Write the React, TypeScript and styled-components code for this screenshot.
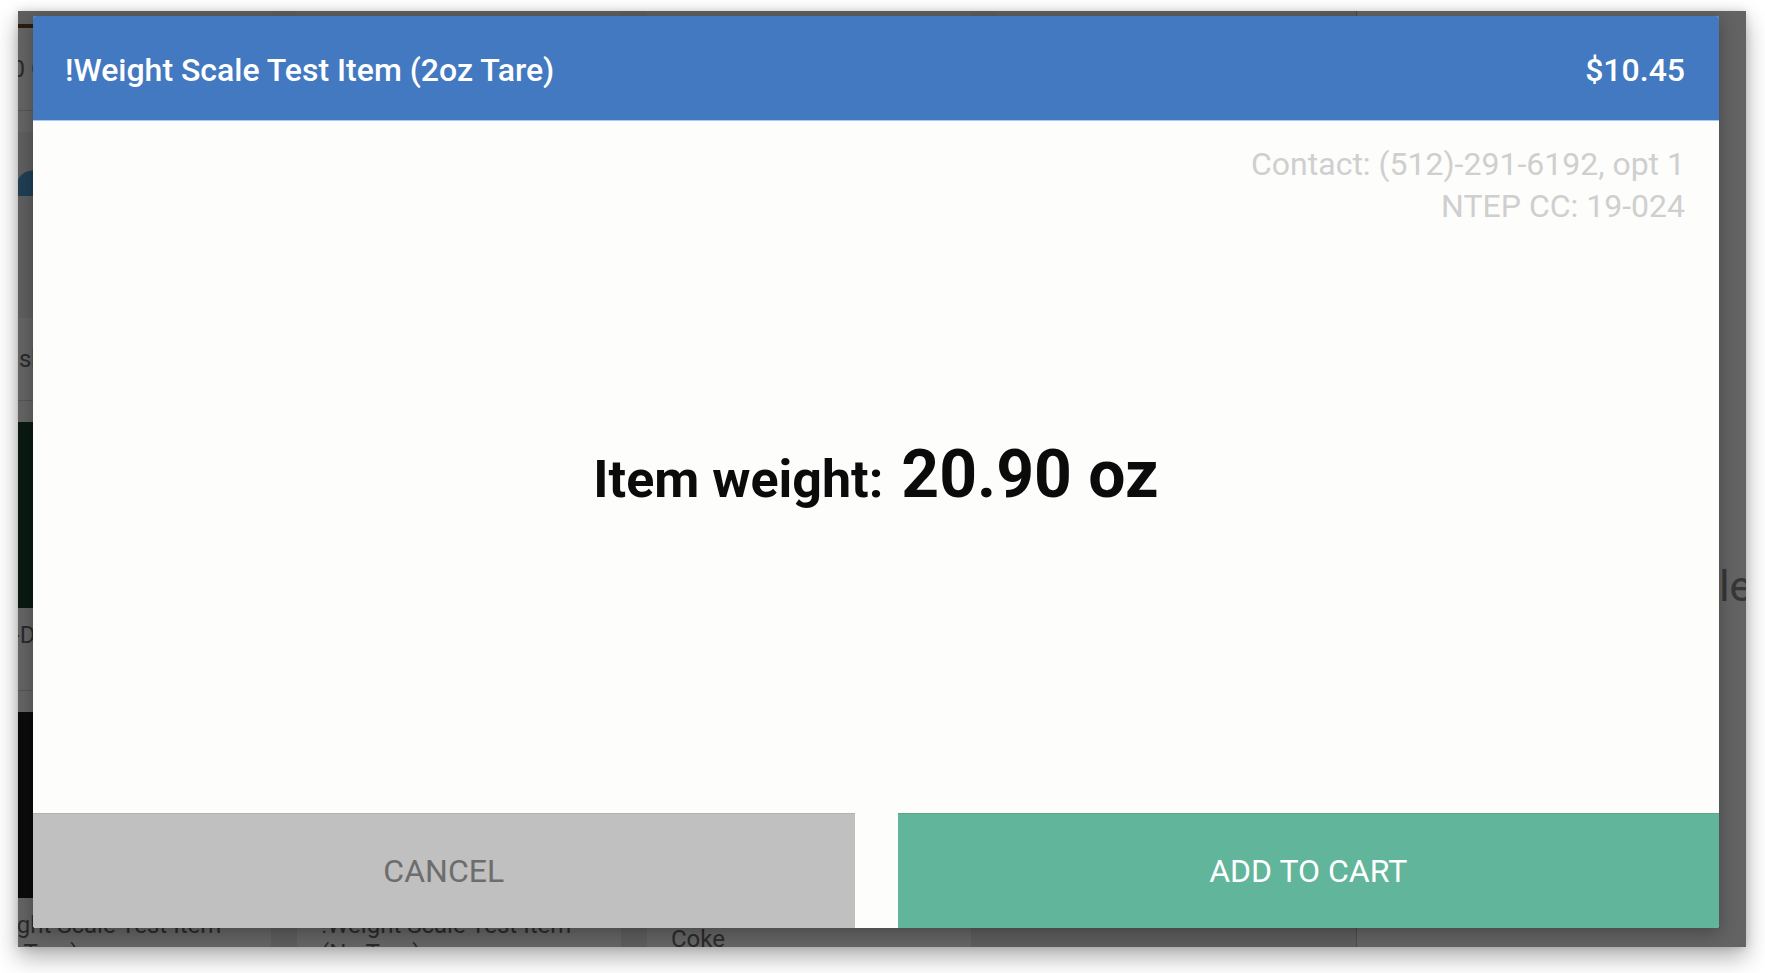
import React from 'react';
import styled, {createGlobalStyle} from "styled-components";

type Product = {
	name: string
	image: string
	blob?: boolean
}

const rows: Product[][] = [
	[
		{name: "$100 Gift Card", image: "linear-gradient(#eeeeee 0 182px, #6a4626 182px)"},
		{name: "Bottled Water", image: "#eeeeee"},
		{name: "Chips", image: "#efefef"},
		{name: "Candy Bar", image: "#eeeeee"},
	],
	[
		{name: "Danish", image: "#eeeeee", blob: true},
		{name: "Muffin", image: "#e6d8c6"},
		{name: "Bagel", image: "#e9dcc4"},
		{name: "Cookie", image: "#dcc8ae"},
	],
	[
		{name: "Mtn-Dew Code Red Soda Can", image: "#19412d"},
		{name: "Sprite", image: "#2f6b3c"},
		{name: "Pepsi", image: "#1d3d78"},
		{name: "Dr Pepper", image: "#5a1d25"},
	],
	[
		{name: "!Weight Scale Test Item (2oz Tare)", image: "#1c1c1c"},
		{name: "!Weight Scale Test Item (No Tare)", image: "#262626"},
		{name: "Coke", image: "#8d1b1b"},
	],
]

export default function App() {
	return (
		<>
			<GlobalStyle/>
			<StyledPage>
				<StyledDevice>
					<StyledLayout>
						<StyledCatalog>
							<StyledGrid>
								{rows.flat().map((item, i) => (
									<StyledCard key={i}>
										<StyledImage $bg={item.image}>
											{item.blob && (
												<svg width="324" height="186" viewBox="0 0 324 186">
													<path d="M70 64 L70 52 Q72 38 90 38 L240 38 L240 64 Z" fill="#4e9ed4"/>
												</svg>
											)}
										</StyledImage>
										<StyledName>{item.name}</StyledName>
									</StyledCard>
								))}
							</StyledGrid>
						</StyledCatalog>
						<StyledSalePanel>
							<StyledPanelTitle>Current Sale</StyledPanelTitle>
						</StyledSalePanel>
					</StyledLayout>

					<StyledOverlay/>

					<StyledDialog>
						<StyledHeader>
							<span>!Weight Scale Test Item (2oz Tare)</span>
							<span>$10.45</span>
						</StyledHeader>
						<StyledBody>
							<StyledContact>
								<div>Contact: (512)-291-6192, opt 1</div>
								<div>NTEP CC: 19-024</div>
							</StyledContact>
							<StyledWeightArea>
								<StyledWeight>
									<StyledWeightLabel>Item weight:</StyledWeightLabel>
									<StyledWeightValue>20.90 oz</StyledWeightValue>
								</StyledWeight>
							</StyledWeightArea>
						</StyledBody>
						<StyledActions>
							<StyledButton $variant="cancel">Cancel</StyledButton>
							<StyledButton $variant="confirm">Add to cart</StyledButton>
						</StyledActions>
					</StyledDialog>
				</StyledDevice>
			</StyledPage>
		</>
	)
}

const GlobalStyle = createGlobalStyle`
	html, body {
		margin: 0;
		padding: 0;
		background: #ffffff;
	}
	body {
		font-family: Roboto, "Noto Sans", "Liberation Sans", sans-serif;
	}
`

const StyledPage = styled.div`
	height: 973px;
	padding: 11px 0 0 18px;
	box-sizing: border-box;
	overflow: hidden;
`

const StyledDevice = styled.div`
	position: relative;
	width: 1728px;
	height: 936px;
	overflow: hidden;
	background: #e8eae8;
	box-shadow: 0 10px 22px rgba(0, 0, 0, 0.32), 0 0 8px rgba(0, 0, 0, 0.15);
`

const StyledLayout = styled.div`
	display: flex;
	height: 100%;
`

const StyledCatalog = styled.div`
	flex: 0 0 1338px;
	overflow: hidden;
	background: #e6e8e6;
`

const StyledGrid = styled.div`
	display: grid;
	grid-template-columns: repeat(4, 324px);
	column-gap: 26px;
	margin: -191px 0 0 -71px;
`

const StyledCard = styled.div`
	display: flex;
	flex-direction: column;
	height: 290px;
	box-sizing: border-box;
	padding-top: 21px;
	background: #f8f9f8;
	border-top: 1px solid #d2d4d2;
`

const StyledImage = styled.div<{ $bg: string }>`
	height: 186px;
	flex-shrink: 0;
	overflow: hidden;
	background: ${props => props.$bg};

	svg {
		display: block;
	}
`

const StyledName = styled.div`
	flex: 1;
	display: flex;
	align-items: center;
	padding: 0 24px;
	font-size: 24px;
	line-height: 28px;
	color: #6a6a6a;
`

const StyledSalePanel = styled.div`
	flex: 0 0 562px;
	display: flex;
	flex-direction: column;
	align-items: center;
	justify-content: center;
	padding-top: 214px;
	box-sizing: border-box;
	background: #f6f7f6;
	border-left: 1px solid #b9bbb9;
`

const StyledPanelTitle = styled.div`
	font-size: 42px;
	color: #888888;
`

const StyledOverlay = styled.div`
	position: absolute;
	inset: 0;
	background: rgba(0, 0, 0, 0.6);
`

const StyledDialog = styled.div`
	position: absolute;
	top: 5px;
	left: 15px;
	right: 27px;
	bottom: 19px;
	display: flex;
	flex-direction: column;
	background: #fdfdfc;
	border-radius: 3px;
	overflow: hidden;
	box-shadow: 0 4px 18px rgba(0, 0, 0, 0.3);
`

const StyledHeader = styled.div`
	flex: 0 0 105px;
	box-sizing: border-box;
	display: flex;
	align-items: center;
	justify-content: space-between;
	padding: 4px 34px 0 32px;
	background: #4379c0;
	border-bottom: 1px solid #a3cdf2;
	color: #ffffff;
	font-size: 32px;
	font-weight: 500;
`

const StyledBody = styled.div`
	flex: 1;
	display: flex;
	flex-direction: column;
	padding: 22px 34px 0;
`

const StyledContact = styled.div`
	align-self: flex-end;
	text-align: right;
	font-size: 32px;
	line-height: 42px;
	color: #cfcfcf;
`

const StyledWeightArea = styled.div`
	flex: 1;
	display: flex;
	align-items: center;
	justify-content: center;
	padding-bottom: 88px;
`

const StyledWeight = styled.div`
	display: flex;
	align-items: baseline;
	gap: 18px;
	color: #0b0b0b;
	font-weight: 700;
`

const StyledWeightLabel = styled.span`
	font-size: 52px;
`

const StyledWeightValue = styled.span`
	font-size: 66px;
	line-height: 1;
`

const StyledActions = styled.div`
	flex: 0 0 115px;
	display: grid;
	grid-template-columns: 1fr 1fr;
	column-gap: 43px;
`

const StyledButton = styled.button<{ $variant: 'cancel' | 'confirm' }>`
	border: none;
	margin: 0;
	padding: 0;
	font-family: inherit;
	font-size: 32px;
	font-weight: 400;
	text-transform: uppercase;
	cursor: pointer;
	background: ${props => props.$variant === 'cancel' ? '#bfc0bf' : '#61b59a'};
	color: ${props => props.$variant === 'cancel' ? '#6d6d6d' : '#ffffff'};
	box-shadow: inset 0 1px 0 rgba(0, 0, 0, 0.08);
`
